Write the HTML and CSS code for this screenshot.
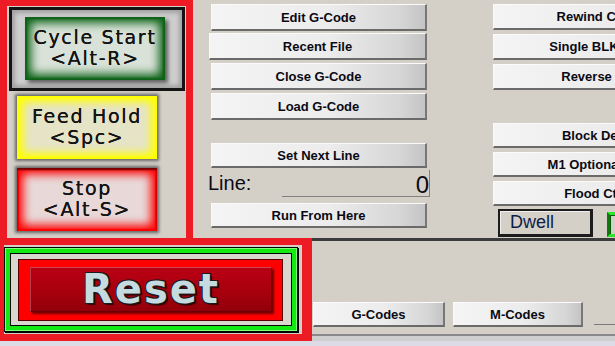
FILE: index.html
```html
<!DOCTYPE html>
<html lang="en">
  <head>
    <meta charset="UTF-8" />
    <meta name="viewport" content="width=device-width, initial-scale=1" />
    <title>Program Run</title>
    <link rel="stylesheet" href="styles.css">
  </head>
  <body>
    <div class="screen">
      <!-- ===== TOP ROW ===== -->
      <div class="top-row">
        <!-- cycle controls -->
        <section class="cycle-panel">
          <div class="cycle-frame">
            <button class="cycle-btn start">Cycle Start<br>&lt;Alt-R&gt;</button>
          </div>
          <button class="cycle-btn hold">Feed Hold<br>&lt;Spc&gt;</button>
          <button class="cycle-btn stop">Stop<br>&lt;Alt-S&gt;</button>
        </section>

        <!-- file column -->
        <section class="file-col">
          <button class="btn">Edit G-Code</button>
          <button class="btn wide">Recent File</button>
          <button class="btn">Close G-Code</button>
          <button class="btn">Load G-Code</button>
          <button class="btn next-line">Set Next Line</button>
          <div class="line-row">
            <span class="line-label">Line:</span>
            <span class="line-field">0</span>
          </div>
          <button class="btn run-here">Run From Here</button>
        </section>

        <!-- mode column (runs past the window edge) -->
        <section class="mode-col">
          <button class="btn">Rewind Ctrl-W</button>
          <button class="btn">Single BLK Alt-N</button>
          <button class="btn">Reverse Run</button>
          <button class="btn block-del">Block Delete</button>
          <button class="btn">M1 Optional Stop</button>
          <button class="btn">Flood Ctrl-F</button>
          <div class="dwell-row">
            <span class="dwell">Dwell</span>
            <span class="led"></span>
          </div>
        </section>
      </div>

      <!-- ===== BOTTOM ROW ===== -->
      <div class="bottom-row">
        <section class="reset-panel">
          <div class="reset-frame">
            <div class="reset-face">
              <button class="reset-btn">Reset</button>
            </div>
          </div>
        </section>
        <div class="tab-strip">
          <div class="tabs">
            <button class="btn tab">G-Codes</button>
            <button class="btn tab m">M-Codes</button>
            <span class="field-edge"></span>
          </div>
        </div>
      </div>
      <div class="status-strip"></div>
    </div>
  </body>
</html>
```

FILE: styles.css
```css
:root {
  /* palette */
  --c-bg: #d4d0c8;
  --c-mark: #ed1c24;
  --c-text: #0a0a14;
  --c-shade: #666;
}
*,*::before,*::after{box-sizing:border-box;margin:0;padding:0}
html,body{width:615px;height:346px;overflow:hidden;background:var(--c-bg)}
body{font-family:"Liberation Sans",Arial,sans-serif;color:var(--c-text)}
button{font:inherit;color:inherit;cursor:pointer;border:none;background:none}

/* ===== LAYOUT ===== */
.screen{display:flex;flex-direction:column;width:615px;height:346px}
.top-row{display:flex;height:238px;flex:none;overflow:hidden}
.bottom-row{display:flex;height:103px;flex:none}
.status-strip{flex:1;background:#dcdbe6}

/* ===== STANDARD BUTTON ===== */
.btn{display:block;height:27px;border:1px solid #fbfbfb;border-right:2px solid #777;border-bottom:2px solid #6a6a6a;background:linear-gradient(90deg,#f4f4f4 0%,#ececec 55%,#d6d6d6 88%,#c4c4c4 100%);font-weight:bold;font-size:13px;text-align:center;color:var(--c-text);flex:none;white-space:nowrap}

/* ===== CYCLE PANEL ===== */
.cycle-panel{width:193px;border:solid var(--c-mark);border-width:6px 7px 0 7px;display:flex;flex-direction:column;align-items:flex-start;flex:none}
.cycle-frame{margin:1px 0 0 2px;width:176px;height:84px;border:3px solid #141414;padding:7px 0 0 13px;background:#cfcfcf;box-shadow:inset 0 0 4px 3px #a2a2a2}
.cycle-btn{width:140px;height:63px;font-family:"DejaVu Sans",Verdana,sans-serif;font-size:19px;letter-spacing:1.7px;line-height:21px;padding-bottom:2px;text-align:center;color:#141414;text-shadow:0 0 .6px #000;flex:none}
.start{background:#d9e2d8;box-shadow:inset 0 0 10px 6px #0e6418,inset 0 0 2px 2px #0a4a10,3px 3px 4px rgba(0,0,0,.55)}
.hold{margin:5px 0 0 10px;background:#e6e4c6;box-shadow:inset 0 0 9px 6px #ffff00,inset 0 0 1px 2px #f2f200,0 0 3px 2px var(--c-shade)}
.stop{margin:9px 0 0 10px;background:#e8d8d8;box-shadow:inset 0 2px 2px #700000,inset 0 0 10px 6px #ff0000,inset 0 0 1px 2px #ee0000,0 0 3px 2px var(--c-shade)}

/* ===== FILE COLUMN ===== */
.file-col{margin-left:18px;width:216px;padding-top:4px;display:flex;flex-direction:column;gap:3px;flex:none}
.file-col .wide{margin:-1px 0 0 -2px;width:218px}
.file-col .next-line{margin-top:20px;height:25px}
.file-col .run-here{margin-top:2px;height:25px}
.line-row{display:flex;height:30px;margin:-3px 0 0 -3px;width:222px}
.line-label{font-size:20px;line-height:24px;padding-top:3px}
.line-field{margin:2px 0 0 auto;width:148px;height:27px;border-right:1px solid #808080;border-bottom:1px solid #808080;text-align:right;font-size:24px;line-height:26px;padding-top:2px}

/* ===== MODE COLUMN ===== */
.mode-col{margin-left:66px;width:217px;padding-top:4px;display:flex;flex-direction:column;gap:4px;flex:none}
.mode-col .btn{height:26px}
.mode-col .block-del{margin-top:29px}
.mode-col .block-del,.mode-col .block-del ~ .btn{height:25px}
.dwell-row{display:flex;gap:14px;margin:-1px 0 0 5px;height:28px}
.dwell{width:95px;height:28px;border:2px solid #1c1c1c;border-right-width:3px;border-bottom-width:3px;font-size:18px;line-height:23px;padding-left:10px;color:#0c1c48;box-shadow:inset 1px 1px 0 #f0f0f0}
.led{width:40px;height:25px;margin-top:3px;border:3px solid #26e826;border-left-color:#0b7a0b;box-shadow:inset 1px 1px 0 #0b5a0b}

/* ===== RESET PANEL ===== */
.reset-panel{width:312px;height:103px;border:solid var(--c-mark);border-width:7px 10px 7px 4px;padding-top:2px;flex:none}
.reset-frame{width:294px;height:85px;border:1px solid #050505;padding:11px 14px 10px 13px;background:#d8d8d0;box-shadow:inset 0 0 0 1px #7cff7c,inset 0 0 0 5px #12ea12,inset 0 0 0 6px #050505,1px 1px 0 #000}
.reset-face{width:265px;height:62px;background:#ff0000;border:1px solid #5a0000;padding:7px 10px 8px 11px}
.reset-btn{display:block;width:242px;height:45px;background:linear-gradient(#b90014,#a6000d 60%,#90000a);border:1px solid #6a0006;border-top-color:#cc4650;border-left-color:#c03a44;box-shadow:2px 2px 2px rgba(0,0,0,.55);font-family:"DejaVu Sans",Verdana,sans-serif;font-weight:bold;font-size:40px;letter-spacing:2px;line-height:43px;color:#c6dbe0;text-shadow:1px 1px 0 #1a1a1a,-1px -1px 0 #1a1a1a,1px -1px 0 #1a1a1a,-1px 1px 0 #1a1a1a,2px 2px 1px #300}

/* ===== TAB STRIP ===== */
.tab-strip{flex:1;display:flex;flex-direction:column;justify-content:flex-end;border-top:3px solid #3b3b3b;padding-bottom:5px;background:linear-gradient(to top,#cfcfcf 5px,transparent 5px)}
.tabs{display:flex;align-items:flex-start;gap:8px;padding:0 0 7px 1px;border-bottom:2px solid #8a8a8a}
.tabs .tab{width:132px;height:25px}
.tabs .m{width:130px}
.field-edge{margin:22px 0 0 3px;width:40px;border-top:1px solid #7a7a7a;height:3px}
```
